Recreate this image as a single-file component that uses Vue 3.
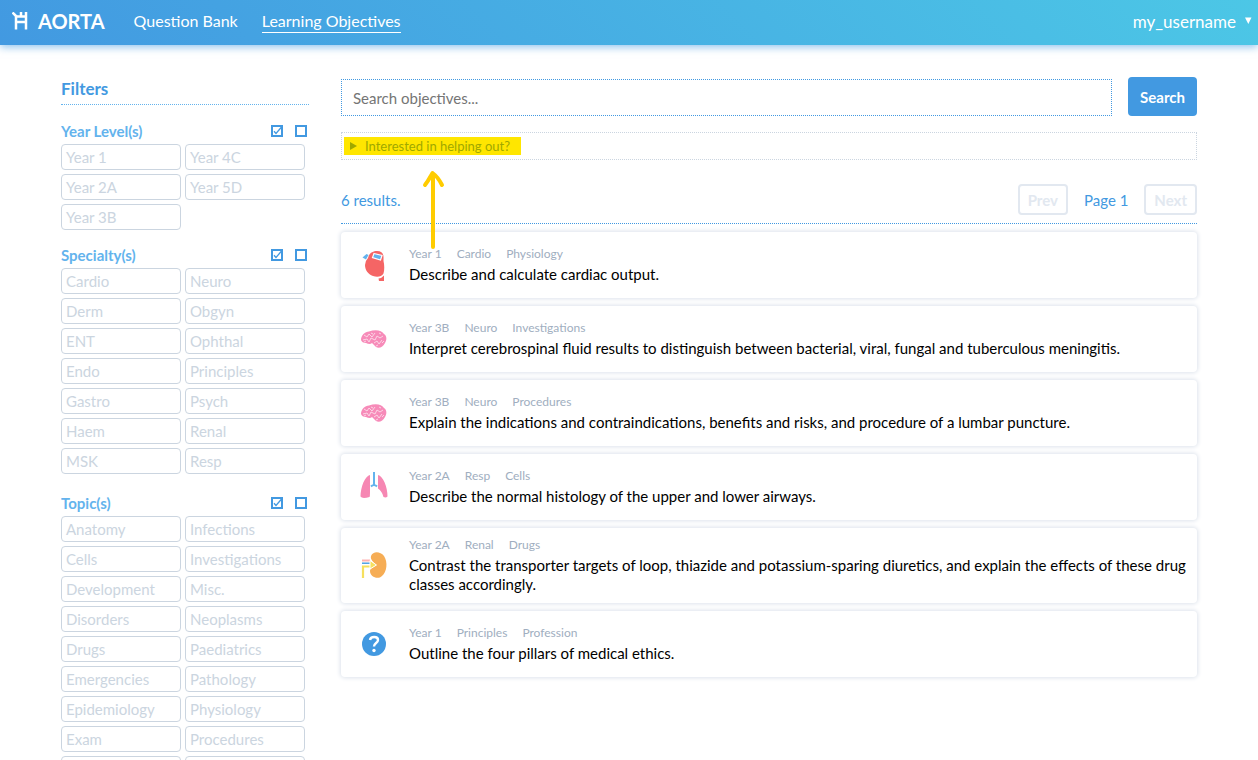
<script setup>
import { ref } from 'vue'

const search = ref('')

const groups = [
  { name: 'Year Level(s)', rows: 3, options: ['Year 1', 'Year 2A', 'Year 3B', 'Year 4C', 'Year 5D'] },
  {
    name: 'Specialty(s)',
    rows: 7,
    roomy: true,
    options: ['Cardio', 'Derm', 'ENT', 'Endo', 'Gastro', 'Haem', 'MSK', 'Neuro', 'Obgyn', 'Ophthal', 'Principles', 'Psych', 'Renal', 'Resp'],
  },
  {
    name: 'Topic(s)',
    rows: 9,
    options: [
      'Anatomy', 'Cells', 'Development', 'Disorders', 'Drugs', 'Emergencies', 'Epidemiology', 'Exam', 'History',
      'Infections', 'Investigations', 'Misc.', 'Neoplasms', 'Paediatrics', 'Pathology', 'Physiology', 'Procedures', 'Profession',
    ],
  },
]

const selected = ref([])
const toggle = (o) => {
  selected.value = selected.value.includes(o) ? selected.value.filter((x) => x !== o) : [...selected.value, o]
}
const selectAll = (g) => {
  selected.value = [...new Set([...selected.value, ...g.options])]
}
const selectNone = (g) => {
  selected.value = selected.value.filter((x) => !g.options.includes(x))
}

const results = [
  { icon: 'heart', tags: ['Year 1', 'Cardio', 'Physiology'], text: 'Describe and calculate cardiac output.' },
  { icon: 'brain', tags: ['Year 3B', 'Neuro', 'Investigations'], text: 'Interpret cerebrospinal fluid results to distinguish between bacterial, viral, fungal and tuberculous meningitis.' },
  { icon: 'brain', tags: ['Year 3B', 'Neuro', 'Procedures'], text: 'Explain the indications and contraindications, benefits and risks, and procedure of a lumbar puncture.' },
  { icon: 'lungs', tags: ['Year 2A', 'Resp', 'Cells'], text: 'Describe the normal histology of the upper and lower airways.' },
  { icon: 'kidney', tags: ['Year 2A', 'Renal', 'Drugs'], text: 'Contrast the transporter targets of loop, thiazide and potassium-sparing diuretics, and explain the effects of these drug classes accordingly.' },
  { icon: 'question', tags: ['Year 1', 'Principles', 'Profession'], text: 'Outline the four pillars of medical ethics.' },
]
</script>

<template>
  <div class="page">
    <header class="topbar">
      <a href="#" class="brand">
        <svg class="logo" viewBox="0 0 16 18" aria-hidden="true">
          <path d="M0.500 0.500 4 4M4 3V17.500M14 0V17.500M3 4.500H15M4 10H14M9 0V5" fill="none" stroke="#fff" stroke-width="2.500" />
        </svg>
        <span>AORTA</span>
      </a>
      <nav class="nav">
        <a href="#">Question Bank</a>
        <a href="#" class="active">Learning Objectives</a>
      </nav>
      <button class="user" type="button">my_username
        <svg viewBox="0 0 8 8" aria-hidden="true"><path d="M1 0.500h6.500L4.300 7z" fill="#fff" /></svg>
      </button>
    </header>

    <div class="content">
      <aside class="sidebar">
        <h2>Filters</h2>
        <section v-for="g in groups" :key="g.name" class="group" :class="{ roomy: g.roomy }">
          <div class="group-head">
            <h3>{{ g.name }}</h3>
            <button type="button" :aria-label="'Select all: ' + g.name" @click="selectAll(g)">
              <svg viewBox="0 0 12 12"><path d="M1 1h10v10H1z" fill="none" stroke="#4299e1" stroke-width="2" /><path d="M3 6.200 5 8.500 11 1.500" fill="none" stroke="#4299e1" stroke-width="1.300" /></svg>
            </button>
            <button type="button" :aria-label="'Select none: ' + g.name" @click="selectNone(g)">
              <svg viewBox="0 0 12 12"><path d="M1 1h10v10H1z" fill="none" stroke="#4299e1" stroke-width="2" /></svg>
            </button>
          </div>
          <div class="options" :style="{ gridTemplateRows: `repeat(${g.rows}, 26px)` }">
            <button v-for="o in g.options" :key="o" type="button" :aria-pressed="selected.includes(o)" @click="toggle(o)">{{ o }}</button>
          </div>
        </section>
      </aside>

      <main class="main">
        <form class="search" @submit.prevent>
          <input v-model="search" type="text" aria-label="Search objectives" placeholder="Search objectives..." />
          <button type="submit">Search</button>
        </form>

        <details class="help">
          <summary>
            <span class="mark">
              <svg class="tri" viewBox="0 0 8 8" aria-hidden="true"><path d="M1 0 8 4 1 8z" fill="#9fa800" /></svg>
              Interested in helping out?
              <svg class="arrow" viewBox="0 0 24 80" aria-hidden="true">
                <path d="M12 77V4M4 15C8 10 9 7 11.500 3Q17 7 21 15" fill="none" stroke="#ffcc00" stroke-width="4" stroke-linecap="round" stroke-linejoin="round" />
              </svg>
            </span>
          </summary>
        </details>

        <div class="results-head">
          <p>6 results.</p>
          <button type="button" disabled>Prev</button>
          <span>Page 1</span>
          <button type="button" disabled>Next</button>
        </div>

        <ul class="results">
          <li v-for="r in results" :key="r.text" class="card">
            <svg class="icon" viewBox="0 0 32 32" aria-hidden="true">
              <g v-if="r.icon === 'heart'">
                <path d="M10 9C11 4 15 2 19 2C23 2 25.500 4 25.500 8V12C26.500 16 26.500 21 25.500 24.500C23.500 28 19 28.500 15 27C10 25 7 21 7 16Q7 12 10 9Z" fill="#f56565" />
                <path d="M20.500 29.500Q24 29 26 26.500V32H21Z" fill="#f56565" />
                <path d="M4.500 8.500 8.500 5 10.500 6 8 10.500Z" fill="#63b3ed" />
                <path d="M16 4.500 24 6.500 22.500 11 14.500 8.500Z" fill="#63b3ed" stroke="#fff" stroke-width="1.200" />
              </g>
              <g v-else-if="r.icon === 'brain'">
                <path d="M3 17C3 12 7 9 11 8.500C17 6 24 7 26 11C29 13 29 17 27 20C25 24 21 26 18 24L14 20Q12 22 8 20Q4 20 3 17Z" fill="#f78bb9" />
                <path d="M6 12l3 2 2-3 3 3 3-4M5 17l4-1 2 3 2-4 4 2 2-4 3 2 3-2M16 20l3-2 2 3 3-4M18 23l2-1M13 10l2 1M8 18l-2 1M21 10l2 1M24 20l2-2" fill="none" stroke="#fcd5e5" stroke-width="1" />
              </g>
              <g v-else-if="r.icon === 'lungs'">
                <path d="M12 4C7 5 2.500 16 2.500 25.500Q4 28 11.500 26Q12 25 12 22Z" fill="#f687b3" />
                <path d="M20 4C25 5 29.500 16 29.500 25.500Q28 27 25.500 26Q24 20 20 17.500Z" fill="#f687b3" />
                <path d="M16 1V13.500M13 15.500Q16 12.500 19 15.500" fill="none" stroke="#63b3ed" stroke-width="2" />
              </g>
              <g v-else-if="r.icon === 'kidney'">
                <path d="M13 7C15 2 22 2 26 7C30 13 29 23 24 27C20 31 12 28 12 22C12 19 16 18 18 16C16 13 12 11 13 7Z" fill="#f6ad55" />
                <path d="M4 11.500h8" stroke="#feb2b2" stroke-width="2" />
                <path d="M4 14.200h8" stroke="#4299e1" stroke-width="1.400" />
                <path d="M5 29V17.500H12" fill="none" stroke="#f6e05e" stroke-width="2.200" />
                <path d="M12 11.500 18.500 16 12 20Z" fill="#f6e05e" stroke="#fff" stroke-width="1" />
              </g>
              <g v-else>
                <circle cx="16" cy="16" r="12" fill="#4299e1" />
                <path d="M12 12C12.500 8 20 8 20 12C20 15 16 15 16 18.500" fill="none" stroke="#fff" stroke-width="2.400" />
                <circle cx="16" cy="22.500" r="1.700" fill="#fff" />
              </g>
            </svg>
            <div class="body">
              <div class="tags"><span v-for="t in r.tags" :key="t">{{ t }}</span></div>
              <p>{{ r.text }}</p>
            </div>
          </li>
        </ul>
      </main>
    </div>
  </div>
</template>

<style>
body {
  background: #fff;
}
</style>

<style scoped>
.page {
  display: flex;
  flex-direction: column;
  height: 100vh;
  overflow: hidden;
  font-family: Lato, "Liberation Sans", sans-serif;
  font-size: 15px;
  color: #000;
}
h2, h3, p, ul {
  margin: 0;
  padding: 0;
}
button, input {
  font: inherit;
  box-sizing: border-box;
}
button {
  padding: 0;
  border: 0;
  background: none;
  cursor: pointer;
}
.topbar {
  display: flex;
  flex: none;
  align-items: center;
  height: 45px;
  padding: 0 6px 3px 12px;
  box-sizing: border-box;
  background: linear-gradient(45deg, #4299e1, #4cc7e6);
  box-shadow: 0 2px 8px rgba(66, 153, 225, 0.6);
  color: #fff;
  font-size: 16px;
}
.topbar a {
  color: #fff;
  text-decoration: none;
}
.brand {
  display: flex;
  align-items: center;
  gap: 10px;
  font-size: 20px;
  font-weight: 700;
}
.logo {
  width: 16px;
  height: 18px;
}
.nav {
  display: flex;
  flex: 1;
  gap: 24px;
  margin-left: 29px;
}
.nav a {
  line-height: 22px;
  border-bottom: 1px solid transparent;
}
.nav a.active {
  border-color: #fff;
}
.user {
  display: flex;
  align-items: center;
  gap: 8px;
  color: #fff;
  font-size: 17px;
}
.user svg {
  width: 8px;
  height: 8px;
}
.content {
  display: grid;
  grid-template-columns: 248px 1fr;
  flex: 1;
  gap: 32px;
  min-height: 0;
  padding: 32px 61px 0;
}
.sidebar {
  overflow-y: auto;
  scrollbar-width: none;
}
.sidebar h2 {
  height: 27px;
  margin-bottom: 16px;
  border-bottom: 1px dotted #63b3ed;
  color: #4299e1;
  font-size: 17px;
  line-height: 24px;
}
.group {
  margin-bottom: 15px;
}
.group.roomy {
  margin-bottom: 19px;
}
.group-head {
  display: flex;
  align-items: center;
  gap: 12px;
  height: 20px;
  margin-bottom: 3px;
  padding: 0 2px 0 0;
}
.group-head h3 {
  flex: 1;
  color: #63b3ed;
  font-size: 15px;
  line-height: 20px;
}
.group-head button, .group-head svg {
  display: block;
  width: 12px;
  height: 12px;
}
.options {
  display: grid;
  grid-auto-flow: column;
  grid-auto-columns: 1fr;
  gap: 4px;
  margin-right: 4px;
}
.options button {
  padding: 0 4px;
  border: 1px solid #cbd5e0;
  border-radius: 4px;
  color: #cbd5e0;
  text-align: left;
}
.options button[aria-pressed="true"] {
  border-color: #4299e1;
  color: #4299e1;
}
.main {
  min-width: 0;
}
.search {
  display: flex;
  align-items: flex-end;
  gap: 16px;
}
.search input {
  flex: 1;
  min-width: 0;
  height: 37px;
  padding: 0 11px;
  border: 1px dotted #4299e1;
  outline: 0;
}
.search input::placeholder {
  color: #757575;
}
.search button {
  height: 39px;
  padding: 0 12px;
  border-radius: 4px;
  background: #4299e1;
  color: #fff;
  font-weight: 700;
}
.help {
  margin-top: 16px;
  border: 1px dotted #cbd5e0;
}
.help summary {
  display: flex;
  padding: 4px 2px;
  list-style: none;
  cursor: pointer;
}
.mark {
  position: relative;
  display: flex;
  align-items: center;
  gap: 8px;
  height: 18px;
  padding: 0 11px 0 5px;
  background: #ffe600;
  color: #9fa800;
  font-size: 13px;
}
.tri {
  width: 8px;
  height: 8px;
}
.arrow {
  position: absolute;
  top: 33px;
  left: 77px;
  width: 24px;
  height: 80px;
}
.results-head {
  display: flex;
  align-items: center;
  gap: 16px;
  margin-top: 24px;
  padding-bottom: 8px;
  border-bottom: 1px dotted #4299e1;
  color: #4299e1;
}
.results-head p {
  flex: 1;
}
.results-head button {
  height: 31px;
  padding: 0 8px;
  border: 2px solid #e2e8f0;
  border-radius: 4px;
  color: #e2e8f0;
  font-weight: 700;
}
.results {
  display: flex;
  flex-direction: column;
  gap: 8px;
  margin-top: 8px;
  list-style: none;
}
.card {
  display: flex;
  align-items: center;
  min-height: 66px;
  box-sizing: border-box;
  padding: 8px 8px 9px 17px;
  border-radius: 4px;
  box-shadow: 0 0 4px 1px #dde3ec;
}
.icon {
  flex: none;
  width: 32px;
  height: 32px;
  margin-right: 19px;
}
.tags {
  display: flex;
  gap: 15px;
  margin-bottom: 2px;
  color: #a0aec0;
  font-size: 12px;
  line-height: 18px;
}
.body p {
  line-height: 19px;
}
</style>
